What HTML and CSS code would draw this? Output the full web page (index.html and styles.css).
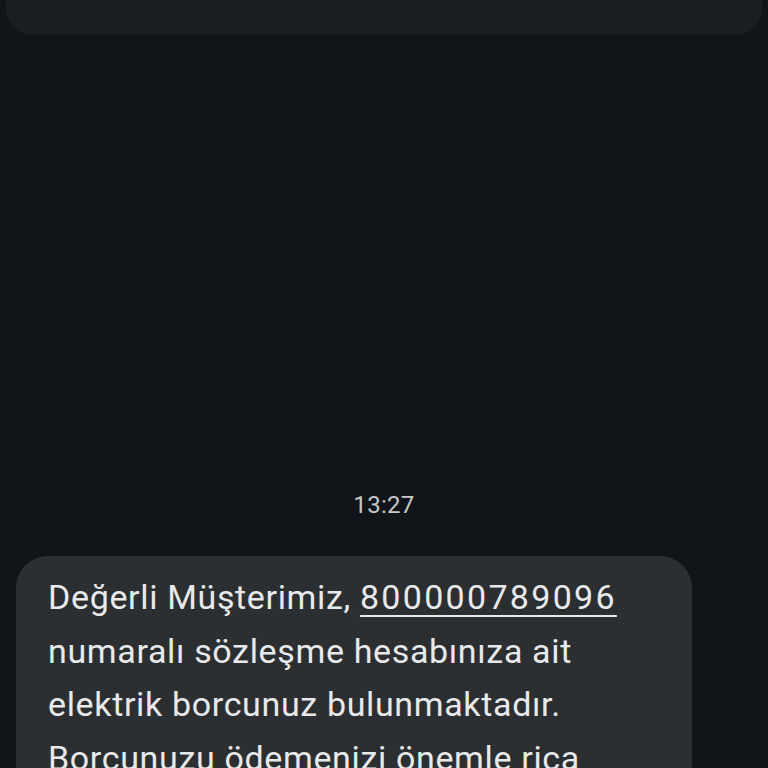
FILE: index.html
```html
<!DOCTYPE html>
<html lang="tr">
<head>
<meta charset="utf-8">
<link rel="stylesheet" href="styles.css">
</head>
<body>
<div class="screen">
  <div class="top-card"></div>
  <div class="spacer"></div>
  <div class="timestamp">13:27</div>
  <div class="bubble">
    <p class="msg">Değerli Müşterimiz, <span class="link">800000789096</span> numaralı sözleşme hesabınıza ait elektrik borcunuz bulunmaktadır. Borcunuzu ödemenizi önemle rica ederiz.</p>
  </div>
</div>
</body>
</html>
```
FILE: styles.css
```css
html, body {
  margin: 0;
  padding: 0;
  background: #111418;
}
.screen {
  width: 768px;
  height: 768px;
  overflow: hidden;
  display: flex;
  flex-direction: column;
  font-family: Roboto, "Noto Sans", sans-serif;
}
.top-card {
  margin: -40px 6px 0 6px;
  height: 75px;
  border-radius: 0 0 26px 26px;
  background: #1a1d21;
  flex: none;
}
.spacer {
  height: 455px;
  flex: none;
}
.timestamp {
  text-align: center;
  color: #c6c8ca;
  font-size: 24px;
  letter-spacing: 0.3px;
  line-height: 30px;
  height: 30px;
  flex: none;
}
.bubble {
  margin: 36px 0 0 16px;
  width: 676px;
  background: #2c2f32;
  border-radius: 32px;
  padding: 15px 32px 20px 32px;
  box-sizing: border-box;
  flex: none;
}
.msg {
  margin: 0;
  color: #e8e9ea;
  font-size: 34px;
  letter-spacing: 0.65px;
  line-height: 53.5px;
}
.link {
  letter-spacing: 2.3px;
  text-decoration: underline;
  text-decoration-thickness: 2px;
  text-underline-offset: 6px;
}
```
